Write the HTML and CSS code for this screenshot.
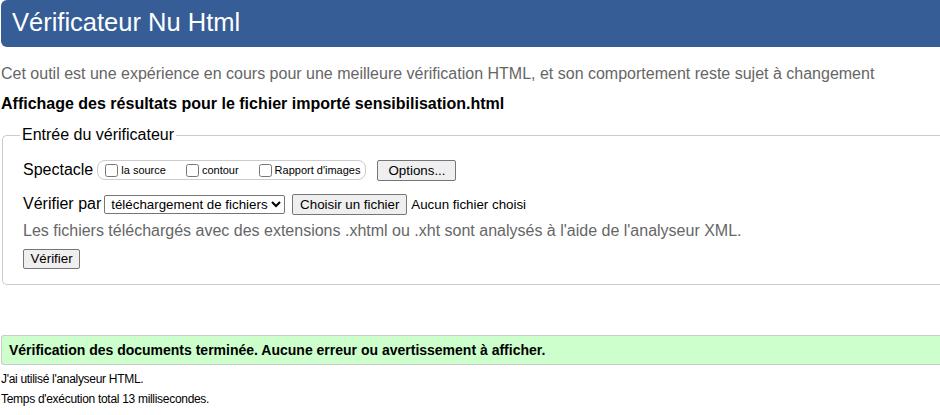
FILE: index.html
```html
<!DOCTYPE html>
<html lang="fr">
<head>
<meta charset="utf-8">
<title>Vérificateur Nu Html</title>
<link rel="stylesheet" href="styles.css">
</head>
<body>
<h1 class="banner">Vérificateur Nu Html</h1>
<p class="intro">Cet outil est une expérience en cours pour une meilleure vérification HTML, et son comportement reste sujet à changement</p>
<p class="showing">Affichage des résultats pour le fichier importé sensibilisation.html</p>
<form class="checker">
  <fieldset class="box">
    <legend class="legend">Entrée du vérificateur</legend>
    <div class="row">
      <span class="label">Spectacle</span>
      <span class="pill">
        <label class="opt"><input type="checkbox" class="cb">la source</label>
        <label class="opt"><input type="checkbox" class="cb">contour</label>
        <label class="opt"><input type="checkbox" class="cb">Rapport d'images</label>
      </span>
      <button type="button" class="btn btn-options">Options...</button>
    </div>
    <div class="row row2">
      <span class="label">Vérifier par</span>
      <select class="sel"><option>téléchargement de fichiers</option></select>
      <button type="button" class="btn btn-file">Choisir un fichier</button>
      <span class="nofile">Aucun fichier choisi</span>
    </div>
    <p class="hint">Les fichiers téléchargés avec des extensions .xhtml ou .xht sont analysés à l'aide de l'analyseur XML.</p>
    <button type="button" class="btn btn-submit">Vérifier</button>
  </fieldset>
</form>
<p class="success">Vérification des documents terminée. Aucune erreur ou avertissement à afficher.</p>
<p class="details">J'ai utilisé l'analyseur HTML.</p>
<p class="details details2">Temps d'exécution total 13 millisecondes.</p>
</body>
</html>
```
FILE: styles.css
```css
html, body {
  margin: 0;
  padding: 0;
  background: #fff;
  overflow: hidden;
}
body {
  font-family: "Liberation Sans", Arial, sans-serif;
  color: #000;
}
.banner {
  margin: 0 0 0 1px;
  height: 47px;
  line-height: 45px;
  padding: 0 0 0 11px;
  background: #365d95;
  color: #fff;
  font-size: 25.5px;
  font-weight: normal;
  border-radius: 6px 0 0 6px;
}
.intro {
  margin: 18px 0 0 1px;
  font-size: 16px;
  line-height: 18px;
  color: #666;
}
.showing {
  margin: 12px 0 0 1px;
  font-size: 16px;
  line-height: 18px;
  font-weight: bold;
}
.checker {
  margin: 13px 0 0 0;
}
.box {
  margin: 0 0 0 2px;
  padding: 0 0 15px 20px;
  border: 1px solid #ccc;
  border-right: none;
  border-radius: 5px 0 0 5px;
  min-width: 0;
}
.legend {
  margin-left: -3px;
  padding: 0 2px;
  font-size: 16px;
  line-height: 18px;
}
.row {
  display: flex;
  align-items: center;
  height: 22px;
  margin-top: 15px;
}
.row2 {
  margin-top: 12px;
}
.label {
  font-size: 16px;
  line-height: 18px;
}
.pill {
  display: flex;
  align-items: center;
  height: 18px;
  margin-left: 4px;
  padding: 0 5px 0 5px;
  border: 1px solid #ccc;
  border-radius: 8px;
}
.opt {
  display: flex;
  align-items: center;
  font-size: 11px;
  margin-right: 18px;
}
.opt:last-child {
  margin-right: 0;
}
.cb {
  width: 13px;
  height: 13px;
  margin: 0 3px 0 2px;
}
.btn {
  font-family: "Liberation Sans", Arial, sans-serif;
  font-size: 13.33px;
  color: #000;
  background: #efefef;
  border: 1px solid #767676;
  border-radius: 2px;
  height: 21px;
  padding: 0 6px;
  line-height: 19px;
}
.btn-options {
  margin-left: 11px;
  width: 79px;
}
.sel {
  font-family: "Liberation Sans", Arial, sans-serif;
  font-size: 13.33px;
  color: #000;
  margin-left: 3px;
  width: 181px;
  height: 19px;
  padding: 0 0 0 2px;
  border: 1px solid #767676;
  border-radius: 2px;
  background: #fff;
}
.btn-file {
  margin-left: 7px;
  width: 115px;
}
.nofile {
  margin-left: 4px;
  font-size: 13.33px;
}
.hint {
  margin: 7px 0 0 0;
  font-size: 16px;
  line-height: 18px;
  color: #666;
}
.btn-submit {
  display: block;
  margin-top: 9px;
  width: 57px;
  height: 20px;
  line-height: 18px;
}
.success {
  margin: 50px 0 0 1px;
  height: 28px;
  line-height: 28px;
  padding: 0 0 0 7px;
  background: #ccffcc;
  border: 1px solid #ccc;
  border-right: none;
  border-radius: 3px 0 0 3px;
  font-size: 14px;
  font-weight: bold;
}
.details {
  margin: 7px 0 0 1px;
  font-size: 12px;
  line-height: 14px;
  letter-spacing: -0.3px;
}
.details2 {
  margin-top: 6px;
}
```
